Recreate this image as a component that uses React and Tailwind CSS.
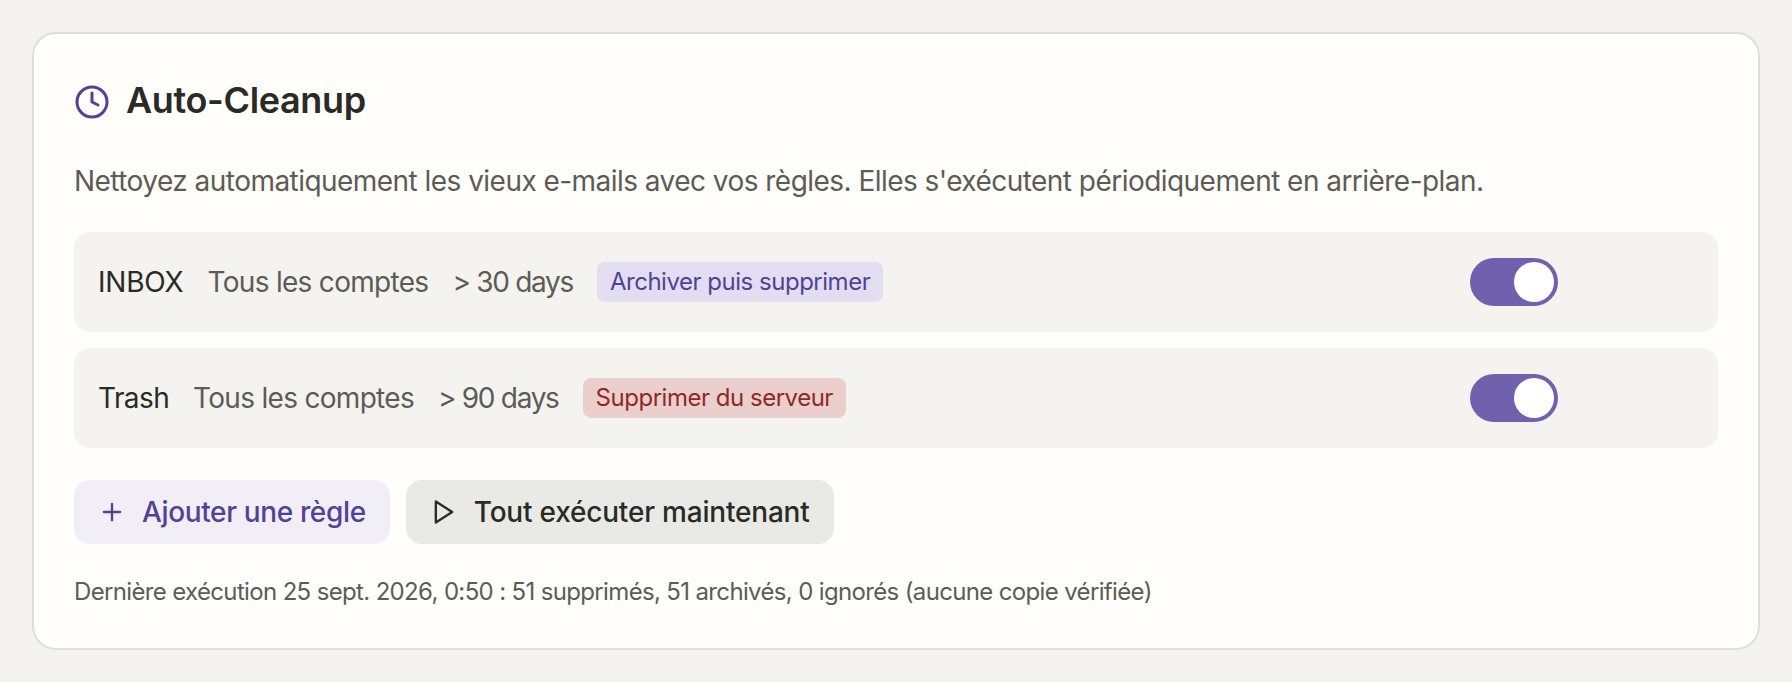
import { Clock, Plus } from 'lucide-react';

const rules = [
  { folder: 'INBOX', folderClass: 'tracking-[-0.2px]', age: '> 30 days', action: 'Archiver puis supprimer', badge: 'bg-[#e2ddf1] text-[#4f4396]' },
  { folder: 'Trash', folderClass: 'tracking-[-0.6px]', age: '> 90 days', action: 'Supprimer du serveur', badge: 'bg-[#ebcfcd] text-[#8f2a25]' },
];

function Toggle() {
  return (
    <button className="flex h-[48px] w-[88px] items-center justify-end rounded-full bg-[#6f61ae] p-[4px]">
      <span className="h-[40px] w-[40px] rounded-full bg-white" />
    </button>
  );
}

export default function App() {
  return (
    <div className="h-[682px] bg-[#f4f3f0] p-[32px] font-['Inter',sans-serif]">
      <div className="rounded-[24px] border-2 border-[#dfdeda] bg-[#fffefb] px-[40px] pt-[40px] pb-[40px]">
        <div className="flex h-[56px] items-center gap-[16px]">
          <Clock className="h-[36px] w-[36px] text-[#4f4396]" strokeWidth={2} />
          <h2 className="pb-[4px] text-[36px] leading-[52px] font-semibold tracking-[-0.36px] text-[#2a2a26]">Auto-Cleanup</h2>
        </div>

        <p className="mt-[30px] mb-[30px] text-[28px] leading-[42px] tracking-[-0.54px] text-[#5c5c55]">
          Nettoyez automatiquement les vieux e-mails avec vos règles. Elles s'exécutent périodiquement en arrière-plan.
        </p>

        <div className="flex flex-col gap-[16px]">
          {rules.map((rule) => (
            <div key={rule.folder} className="flex h-[100px] items-center rounded-[16px] bg-[#f4f3f0] pr-[160px] pl-[24px]">
              <div className="flex flex-1 items-center gap-[24px] text-[28px] text-[#5c5c55]">
                <span className={`text-[#2a2a26] ${rule.folderClass}`}>{rule.folder}</span>
                <span className="tracking-[-0.7px]">Tous les comptes</span>
                <span className="tracking-[-1.3px]">{rule.age}</span>
                <span className={`flex h-[40px] items-center rounded-[8px] px-[13px] text-[24px] tracking-[-0.48px] ${rule.badge}`}>{rule.action}</span>
              </div>
              <Toggle />
            </div>
          ))}
        </div>

        <div className="mt-[32px] flex gap-[16px]">
          <button className="flex h-[64px] items-center gap-[16px] rounded-[16px] bg-[#f1eef7] px-[24px] text-[28px] font-medium tracking-[-0.36px] text-[#4f4396]">
            <Plus className="h-[28px] w-[28px]" strokeWidth={2} />
            Ajouter une règle
          </button>
          <button className="flex h-[64px] items-center gap-[16px] rounded-[16px] bg-[#e9eae6] px-[24px] text-[28px] font-medium tracking-[-0.2px] text-[#2a2a26]">
            <svg className="h-[28px] w-[28px]" viewBox="0 0 24 24" fill="none" stroke="currentColor" strokeWidth="2" strokeLinejoin="round">
              <polygon points="5 3 19 12 5 21" />
            </svg>
            Tout exécuter maintenant
          </button>
        </div>

        <p className="mt-[32px] text-[24px] leading-[32px] tracking-[-0.65px] text-[#5c5c55]">
          Dernière exécution 25 sept. 2026, 0:50 : 51 supprimés, 51 archivés, 0 ignorés (aucune copie vérifiée)
        </p>
      </div>
    </div>
  );
}
